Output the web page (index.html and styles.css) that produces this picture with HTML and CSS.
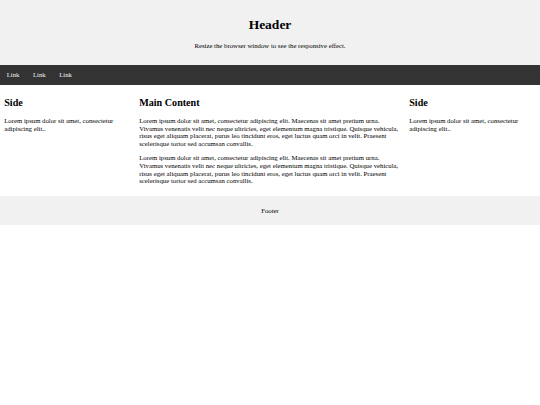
FILE: index.html
```
<!DOCTYPE html>
<html>
<head>
<meta charset="utf-8">
<link rel="stylesheet" href="styles.css">
</head>
<body>
<div class="header">
  <h1>Header</h1>
  <p>Resize the browser window to see the responsive effect.</p>
</div>
<div class="topnav">
  <a href="#">Link</a>
  <a href="#">Link</a>
  <a href="#">Link</a>
</div>
<div class="row">
  <div class="column side">
    <h2>Side</h2>
    <p>Lorem ipsum dolor sit amet, consectetur adipiscing elit..</p>
  </div>
  <div class="column middle">
    <h2>Main Content</h2>
    <p>Lorem ipsum dolor sit amet, consectetur adipiscing elit. Maecenas sit amet pretium urna. Vivamus venenatis velit nec neque ultricies, eget elementum magna tristique. Quisque vehicula, risus eget aliquam placerat, purus leo tincidunt eros, eget luctus quam orci in velit. Praesent scelerisque tortor sed accumsan convallis.</p>
    <p>Lorem ipsum dolor sit amet, consectetur adipiscing elit. Maecenas sit amet pretium urna. Vivamus venenatis velit nec neque ultricies, eget elementum magna tristique. Quisque vehicula, risus eget aliquam placerat, purus leo tincidunt eros, eget luctus quam orci in velit. Praesent scelerisque tortor sed accumsan convallis.</p>
  </div>
  <div class="column side">
    <h2>Side</h2>
    <p>Lorem ipsum dolor sit amet, consectetur adipiscing elit..</p>
  </div>
</div>
<div class="footer">
  <p>Footer</p>
</div>
</body>
</html>
```
FILE: styles.css
```
* { box-sizing: border-box; }
body {
  margin: 0;
  font-family: "Liberation Serif", "Times New Roman", serif;
  font-size: 6.75px;
  line-height: 7.76px;
  color: #000;
  background: #fff;
}
p { margin: 6.75px 0; }
.header {
  background-color: #f1f1f1;
  padding: 8.44px;
  text-align: center;
}
.header h1 {
  font-size: 13.5px;
  line-height: 15.53px;
  margin: 9.05px 0;
}
.topnav {
  display: flex;
  background-color: #333;
}
.topnav a {
  display: block;
  color: #f2f2f2;
  text-align: center;
  padding: 5.9px 6.75px;
  text-decoration: none;
}
.row { display: flex; align-items: flex-start; }
.column { padding: 4.22px; }
.column p { line-height: 7.6px; }
.column h2 {
  font-size: 10.125px;
  line-height: 11.65px;
  margin: 8.4px 0;
}
.side { width: 25%; }
.middle { width: 50%; }
.footer {
  background-color: #f1f1f1;
  padding: 4.22px;
  text-align: center;
}
```
